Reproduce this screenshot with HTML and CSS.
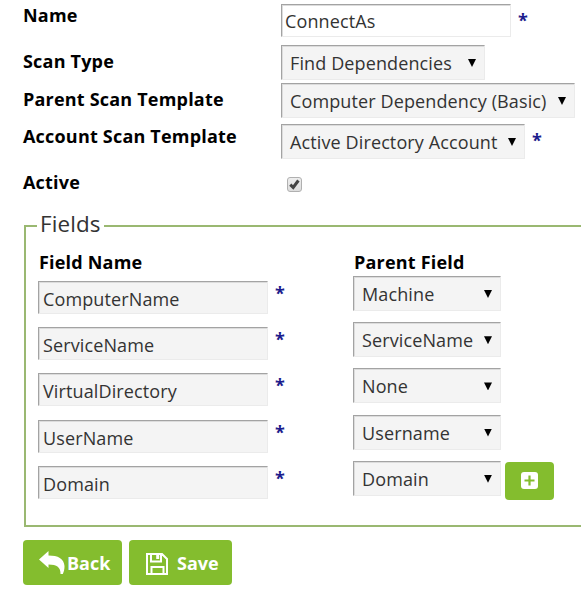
FILE: index.html
```html
<!DOCTYPE html>
<html lang="en">
<head>
<meta charset="utf-8">
<title>Scan Template</title>
<link rel="stylesheet" href="styles.css">
</head>
<body>
<main class="page">
  <div class="row row-name"><span class="label">Name</span><div class="box input">ConnectAs</div><span class="star">*</span></div>
  <div class="row row-type"><span class="label">Scan Type</span><div class="box select"><span>Find Dependencies</span><i class="arrow"></i></div></div>
  <div class="row row-parent"><span class="label">Parent Scan Template</span><div class="box select"><span>Computer Dependency (Basic)</span><i class="arrow"></i></div></div>
  <div class="row row-account"><span class="label">Account Scan Template</span><div class="box select"><span>Active Directory Account</span><i class="arrow"></i></div><span class="star">*</span></div>
  <div class="row row-active"><span class="label">Active</span><span class="check"><svg width="13" height="13" viewBox="0 0 13 13"><path d="M2.300 6.600l2.900 2.900 5.200-7" fill="none" stroke="#444" stroke-width="3"/></svg></span></div>

  <section class="fields">
    <div class="legend"><span>Fields</span></div>
    <div class="heads"><span class="label">Field Name</span><span class="label">Parent Field</span></div>
    <div class="field"><div class="box input">ComputerName</div><span class="star">*</span><div class="box select"><span>Machine</span><i class="arrow"></i></div></div>
    <div class="field"><div class="box input">ServiceName</div><span class="star">*</span><div class="box select"><span>ServiceName</span><i class="arrow"></i></div></div>
    <div class="field"><div class="box input">VirtualDirectory</div><span class="star">*</span><div class="box select"><span>None</span><i class="arrow"></i></div></div>
    <div class="field"><div class="box input">UserName</div><span class="star">*</span><div class="box select"><span>Username</span><i class="arrow"></i></div></div>
    <div class="field"><div class="box input">Domain</div><span class="star">*</span><div class="box select"><span>Domain</span><i class="arrow"></i></div>
      <div class="btn add"><svg width="17" height="17" viewBox="0 0 17 17"><rect width="17" height="17" rx="3" fill="#fff"/><path d="M8.500 3.500v10M3.500 8.500h10" stroke="#84bd2e" stroke-width="2.200"/></svg></div></div>
  </section>

  <div class="actions">
    <div class="btn back"><svg width="26" height="23" viewBox="0 0 26 23"><path d="M0 8.500L9.500 0v4.500C19 4.500 25 7.500 25.500 15c.1 3-.7 6-1.700 8h-2.300c.3-6.500-3.500-9.500-12-9.500V17z" fill="#fff"/></svg><span>Back</span></div>
    <div class="btn save"><svg width="22" height="22" viewBox="0 0 22 22" fill="none" stroke="#fff" stroke-width="2"><path d="M1 1h15l5 5V21H1zM5 1v7.500h10V1M5.500 21v-7h12v7"/><path d="M10.200 1h3v5h-3z" fill="#fff" stroke="none"/></svg><span>Save</span></div>
  </div>
</main>
</body>
</html>
```
FILE: styles.css
```css
* { box-sizing: border-box; }
html, body { margin: 0; overflow: hidden; background: #fff; }
body { font: 18px/24px "Open Sans", sans-serif; letter-spacing: 0.12px; color: #333; }
.page { width: 581px; height: 595px; overflow: hidden; padding: 4px 0 0 23px; }
.row { display: flex; align-items: flex-start; white-space: nowrap; }
.label { color: #000; font-weight: 700; font-size: 18px; letter-spacing: 0.2px; }
.row .label { width: 258px; flex: none; }
.box { flex: none; border: 1px solid #ebebeb; border-top: 1px solid #a3a3a3; border-left-color: #a3a3a3; background: #f4f4f4; box-shadow: inset 1px 1px 0 #dcdcdc; white-space: nowrap; }
.input { width: 230px; height: 33px; padding: 4px 0 0 3px; }
.select { height: 35px; display: flex; justify-content: space-between; padding: 5px 8px 0 8px; }
.arrow { width: 8px; height: 8px; margin-top: 8px; background: #000; clip-path: polygon(0 0, 100% 0, 50% 100%); }
.star { color: #1c1c8c; font-weight: 700; margin-left: 7px; line-height: 24px; }

.row-name { height: 41px; }
.row-name .label { margin-top: -1px; }
.row-name .input { background: #fff; }
.row-name .star { margin-top: 4px; }
.row-type { height: 38px; }
.row-type .label { margin-top: 4px; }
.row-type .select { width: 204px; }
.row-parent { height: 41px; }
.row-parent .label { margin-top: 4px; }
.row-parent .select { width: 294px; }
.row-account { height: 46px; }
.row-account .select { width: 244px; }
.row-account .star { margin-top: 4px; }
.row-active { height: 55px; }
.check { display: flex; width: 15px; height: 15px; margin: 7px 0 0 6px; border: 1px solid #b0b0b0; border-radius: 3px; background: linear-gradient(#eee, #ddd); }

.fields { width: 700px; height: 302px; margin-left: 1px; border: 2px solid #9ab871; padding-left: 12px; }
.legend { height: 24px; margin-top: -17px; line-height: 28px; font-size: 22.4px; }
.legend span { display: inline-block; background: #fff; margin-left: -1px; padding: 0 3px 0 3px; }
.heads { display: flex; margin-top: 16px; height: 26px; padding-left: 1px; }
.heads .label { width: 315px; }
.field { display: flex; height: 46px; }
.field + .field { margin-top: 0.2px; }
.field .input { margin-top: 5px; padding: 5px 0 0 4px; }
.field .star { margin-top: 5px; width: 13px; }
.field .select { width: 148px; margin-left: 65px; }

.btn { display: flex; align-items: center; background: #84bd2e; color: #fff; border-radius: 4px; font-weight: 700; letter-spacing: 0; }
.add { width: 49px; height: 38px; margin: 1px 0 0 4px; justify-content: center; }
.actions { display: flex; gap: 7px; margin-top: 13px; }
.back { width: 99px; height: 45px; padding-left: 16px; }
.back span { margin: 1px 0 0 2px; }
.save { width: 103px; height: 45px; padding-left: 17px; }
.save svg { margin-top: 3px; }
.save span { margin: 1px 0 0 9px; }
```
